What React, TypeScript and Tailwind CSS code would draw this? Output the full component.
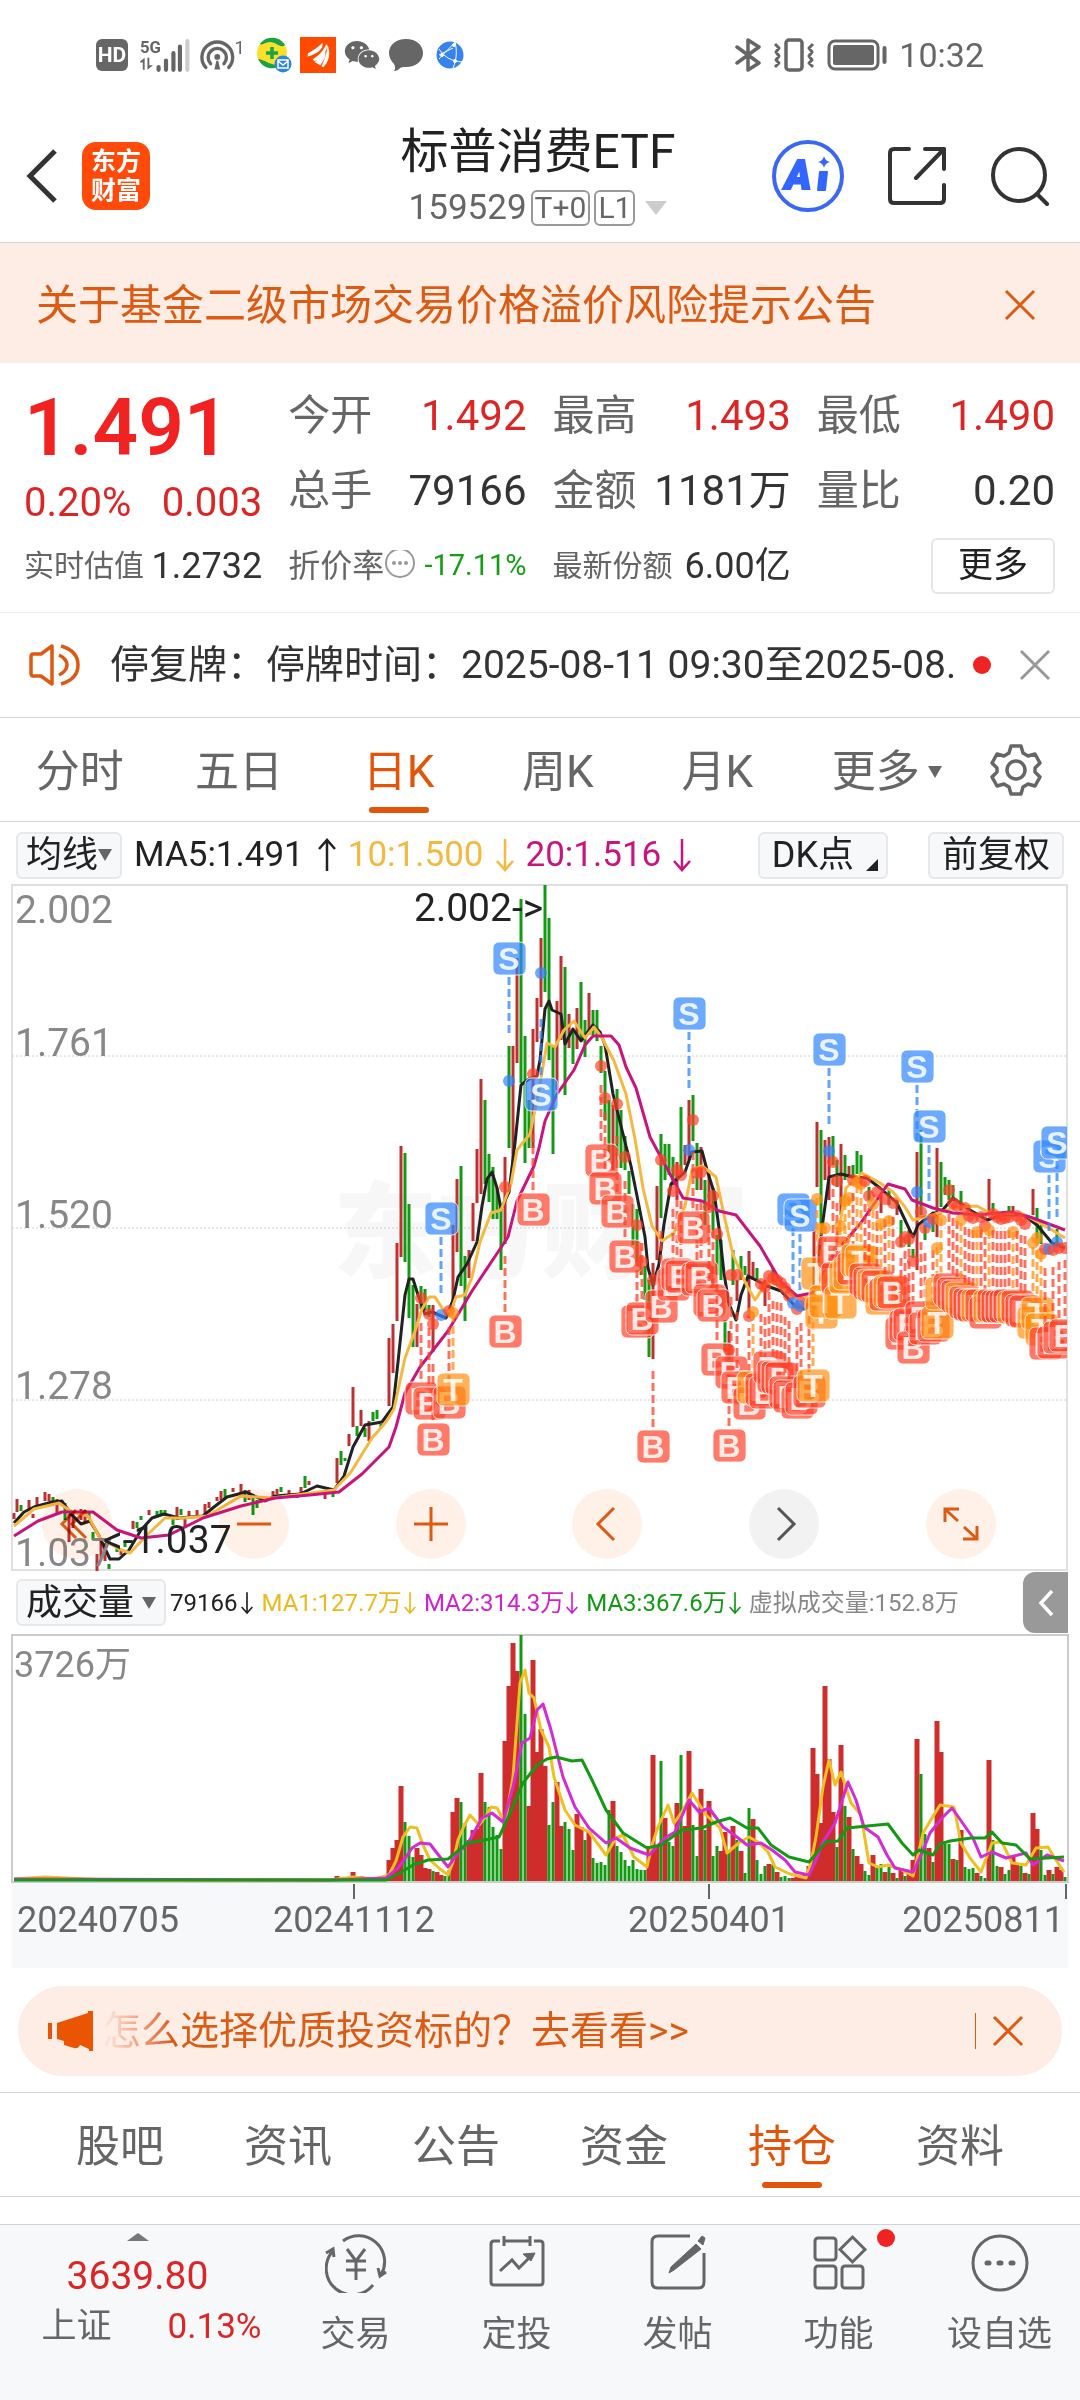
import type { ReactNode } from 'react';
import { FaWeixin } from 'react-icons/fa';

type MarkKind = 'B' | 'S' | 'T';
type Mark = [MarkKind, number, number, number];

// kind, x, box centre y, dot y
const marks: Mark[] = [
  ['B', 421, 1398, 1298], ['B', 429, 1403, 1314], ['B', 433, 1439, 1324], ['S', 441, 1218, 1315],
  ['B', 449, 1402, 1311], ['T', 453, 1389, 1313], ['B', 505, 1331, 1187], ['S', 509, 958, 1081],
  ['B', 533, 1209, 1074], ['S', 541, 1094, 973],
  ['B', 601, 1160, 1066], ['B', 605, 1188, 1098], ['B', 617, 1211, 1104], ['B', 625, 1256, 1157],
  ['B', 637, 1321, 1225], ['B', 642, 1318, 1262], ['B', 653, 1446, 1280], ['B', 661, 1306, 1160],
  ['B', 673, 1284, 1191], ['B', 677, 1274, 1170], ['B', 681, 1276, 1175], ['S', 689, 1013, 1150],
  ['B', 697, 1279, 1173], ['B', 701, 1277, 1172], ['B', 693, 1227, 1120], ['B', 709, 1300, 1207],
  ['B', 713, 1305, 1196], ['B', 717, 1359, 1234], ['B', 729, 1445, 1350], ['B', 731, 1372, 1275],
  ['B', 737, 1387, 1275], ['B', 749, 1403, 1316], ['T', 753, 1387, 1312], ['B', 761, 1389, 1284],
  ['B', 765, 1392, 1287], ['B', 769, 1367, 1276], ['B', 773, 1376, 1278], ['B', 777, 1377, 1280],
  ['B', 781, 1378, 1283], ['B', 785, 1392, 1288], ['B', 789, 1396, 1296], ['B', 797, 1402, 1309],
  ['B', 801, 1398, 1303], ['S', 793, 1209, 1303], ['S', 800, 1215, 1306],
  ['B', 809, 1391, 1303], ['T', 813, 1385, 1300],
  ['T', 817, 1273, 1199], ['T', 821, 1312, 1229], ['T', 825, 1301, 1228], ['S', 829, 1049, 1151],
  ['B', 833, 1252, 1162], ['B', 837, 1278, 1181], ['T', 840, 1302, 1226], ['T', 845, 1277, 1201],
  ['T', 849, 1273, 1198], ['B', 853, 1268, 1180], ['T', 857, 1260, 1182], ['T', 861, 1261, 1184],
  ['B', 865, 1279, 1181], ['B', 869, 1283, 1196], ['T', 873, 1285, 1204], ['B', 877, 1286, 1192],
  ['T', 881, 1298, 1224], ['B', 885, 1294, 1199], ['T', 889, 1291, 1221], ['B', 893, 1292, 1203],
  ['B', 901, 1333, 1242], ['B', 905, 1326, 1237], ['B', 909, 1324, 1239], ['B', 913, 1347, 1261],
  ['S', 917, 1066, 1192], ['B', 921, 1317, 1212], ['B', 925, 1328, 1228], ['S', 929, 1126, 1222],
  ['B', 933, 1325, 1219], ['T', 937, 1322, 1248], ['T', 941, 1293, 1220], ['B', 949, 1289, 1190],
  ['B', 953, 1293, 1203], ['B', 957, 1296, 1206], ['T', 961, 1298, 1220], ['B', 965, 1302, 1208],
  ['B', 969, 1304, 1216], ['B', 973, 1305, 1218], ['T', 977, 1305, 1232], ['B', 981, 1305, 1217],
  ['B', 985, 1312, 1226], ['T', 989, 1306, 1230], ['B', 993, 1305, 1214], ['B', 997, 1306, 1217],
  ['B', 1001, 1306, 1219], ['B', 1005, 1306, 1218], ['B', 1009, 1305, 1217], ['T', 1013, 1307, 1232],
  ['B', 1017, 1306, 1216], ['B', 1021, 1310, 1220], ['B', 1025, 1311, 1224], ['T', 1033, 1322, 1243],
  ['T', 1037, 1313, 1238], ['T', 1041, 1329, 1254], ['B', 1045, 1343, 1249], ['S', 1049, 1156, 1249],
  ['B', 1053, 1342, 1250], ['S', 1057, 1142, 1242], ['B', 1059, 1337, 1248], ['B', 1065, 1335, 1248],
];

const markColors: Record<MarkKind, string> = { B: '#ff4229', S: '#2f86ff', T: '#ff9212' };

const redCandles =
  'M14 1513V1519M17 1499V1512M29 1500V1510M33 1514V1518M37 1497V1507M45 1492V1501M49 1494V1501M57 1499V1513M69 1514V1542M73 1514V1528M81 1509V1520M85 1510V1523M97 1554V1571M101 1540V1558M105 1543V1561M121 1549V1555M133 1521V1529M149 1510V1515M177 1507V1520M185 1519V1528M189 1511V1517M197 1510V1517M205 1504V1515M209 1502V1508M217 1497V1501M221 1491V1500M233 1488V1492M241 1484V1493M249 1490V1500M273 1491V1497M277 1489V1494M289 1490V1495M297 1494V1498M301 1487V1494M309 1481V1485M325 1492V1499M337 1458V1483M349 1434V1446M353 1387V1427M361 1410V1426M369 1421V1441M389 1338V1406M393 1324V1373M397 1243V1321M401 1146V1257M417 1304V1347M433 1305V1352M453 1225V1306M457 1179V1252M469 1250V1278M473 1203V1241M477 1149V1203M481 1079V1194M505 1157V1244M513 1046V1165M517 958V1063M533 1029V1148M537 998V1042M541 938V1007M557 1001V1090M561 956V1040M569 1014V1048M577 1008V1049M589 993V1035M613 1105V1170M653 1263V1359M657 1186V1260M677 1162V1200M685 1145V1165M689 1100V1160M701 1147V1190M709 1170V1210M729 1331V1360M737 1280V1301M749 1251V1318M753 1262V1280M765 1280V1306M814 1230V1310M817 1122V1187M825 1140V1180M829 1137V1200M841 1144V1215M849 1166V1178M881 1195V1213M897 1200V1215M917 1152V1270M937 1148V1237M989 1179V1215M1013 1206V1216M1033 1189V1215';
const greenCandles =
  'M21 1505V1511M53 1497V1502M65 1503V1520M89 1511V1518M93 1532V1540M109 1564V1569M117 1546V1552M125 1541V1547M137 1522V1528M141 1516V1520M157 1511V1516M161 1510V1515M165 1510V1516M173 1518V1525M181 1509V1515M225 1489V1498M245 1490V1502M253 1498V1515M257 1500V1508M281 1487V1492M305 1476V1488M333 1494V1497M341 1451V1465M345 1458V1461M357 1426V1436M365 1428V1437M373 1412V1421M377 1410V1419M381 1424V1428M405 1153V1262M409 1204V1318M413 1285V1347M421 1286V1309M425 1289V1310M429 1305V1317M461 1166V1286M465 1256V1321M485 1100V1184M489 1154V1202M493 1167V1219M497 1188V1219M501 1204V1270M509 1046V1148M521 899V1083M525 1036V1163M529 1100V1148M545 885V992M549 918V1060M553 1045V1154M565 967V1095M573 1030V1064M581 982V1040M585 1020V1057M593 1010V1035M597 1010V1041M601 1046V1073M605 1071V1120M609 1100V1160M617 1089V1160M621 1110V1168M625 1136V1170M629 1171V1194M633 1204V1245M637 1209V1262M641 1255V1275M645 1266V1300M649 1280V1357M661 1134V1218M665 1144V1180M669 1144V1175M673 1157V1185M681 1107V1175M693 1095V1141M697 1143V1190M705 1180V1225M713 1188V1230M717 1235V1275M721 1240V1280M725 1320V1352M733 1250V1285M741 1256V1280M745 1266V1275M757 1268V1280M773 1268V1285M821 1130V1225M833 1136V1165M837 1160V1187M845 1155V1180M853 1165V1180M857 1151V1174M861 1155V1174M869 1187V1200M889 1190V1205M901 1220V1247M909 1230V1247M913 1249V1258M921 1130V1215M925 1225V1240M933 1215V1232M941 1162V1207M945 1177V1195M949 1180V1200M953 1185V1200M961 1191V1210M993 1203V1215M1009 1206V1216M1037 1208V1240M1041 1225V1244M1057 1229V1245';

const ma5 =
  '14,1523 24,1512 34,1507 52,1502 62,1501 71,1514 81,1524 90,1521 98,1534 110,1559 119,1559 129,1550 141,1530 152,1518 164,1514 179,1518 203,1516 214,1507 227,1497 246,1492 265,1501 275,1496 300,1494 317,1486 334,1490 344,1476 353,1447 365,1425 382,1422 393,1407 398,1362 405,1295 409,1279 413,1279 418,1295 425,1314 432,1312 446,1318 453,1300 458,1277 467,1264 477,1242 482,1206 487,1179 492,1172 497,1188 501,1209 509,1192 515,1143 521,1085 529,1079 537,1076 540,1060 545,1009 549,1001 552,1010 561,1014 565,1044 573,1029 581,1041 593,1025 600,1032 605,1045 613,1094 623,1134 631,1166 638,1201 645,1237 648,1268 653,1285 659,1264 664,1224 671,1184 685,1172 692,1152 702,1151 707,1170 714,1192 719,1228 724,1273 729,1304 736,1320 741,1295 748,1276 767,1286 781,1291 795,1306 805,1309 815,1291 822,1228 829,1177 841,1174 853,1177 867,1178 880,1188 897,1203 905,1220 913,1237 918,1225 933,1213 940,1213 953,1198 970,1210 987,1220 1003,1215 1023,1215 1037,1225 1052,1243 1065,1248';
const ma10 =
  '14,1526 34,1509 59,1503 72,1512 88,1516 100,1538 119,1549 130,1553 148,1534 165,1518 183,1518 207,1516 241,1496 272,1498 296,1495 334,1490 351,1472 372,1438 386,1422 394,1409 405,1358 415,1331 422,1309 429,1297 435,1297 444,1311 451,1311 456,1297 465,1295 472,1277 480,1242 491,1213 501,1210 511,1184 517,1150 530,1134 539,1090 547,1043 555,1047 564,1030 574,1021 585,1038 594,1027 602,1038 614,1061 626,1094 635,1139 643,1188 652,1226 662,1241 674,1233 685,1206 692,1170 702,1166 716,1177 724,1215 733,1255 747,1286 755,1300 767,1282 781,1286 795,1297 812,1297 828,1277 840,1224 846,1188 862,1173 880,1183 893,1192 905,1207 913,1220 933,1215 947,1210 960,1207 977,1206 990,1213 1023,1214 1047,1227 1065,1238';
const ma20 =
  '14,1536 38,1521 62,1512 93,1512 117,1530 141,1538 169,1535 203,1518 241,1506 275,1498 310,1495 339,1492 362,1474 389,1447 396,1427 405,1393 420,1367 448,1331 472,1291 496,1255 508,1237 517,1201 534,1166 539,1148 545,1121 557,1094 574,1070 585,1045 593,1036 611,1036 619,1045 626,1067 636,1088 650,1137 664,1163 683,1198 702,1201 719,1211 736,1215 760,1246 781,1282 797,1296 812,1293 833,1255 860,1224 888,1184 905,1189 912,1200 933,1208 953,1213 977,1215 1010,1212 1030,1217 1065,1230';

// bar heights from x = 389 in steps of 4; below zero is a falling day
const volumes = [
  21, 33, 41, 95, -59, -45, -24, 33, 26, 13, 12, -10, 9, 6, -5, -11, 69, 83, -79, -58, 41, 51, 52, 108, -79, -74,
  -54, -46, -32, 140, 195, 238, 210, -246, -167, 75, 221, 129, 152, 115, -56, -79, 99, 55, -59, -52, -31, 67, 54,
  -41, 49, -23, -18, -19, -16, -71, 80, -35, -29, -21, -15, -21, -12, -11, -11, 35, 126, 35, -120, 63, -39, -35, 78,
  -126, 55, 130, -56, -25, 92, -51, 80, -25, -35, 30, 49, -31, 55, -41, 30, -8, -73, 62, -21, -7, -15, 17, -16, 9,
  -4, -5, -3, 3, 4, 3, 6, 15, 133, 107, 58, 195, 122, 69, -34, 136, -75, 64, -32, 25, 17, -10, -6, 26, -13, -17, 9,
  -14, 8, -3, 11, -5, 11, 21, 142, -107, -47, 33, -19, 160, 129, -37, -37, 22, -21, 51, -14, -12, -13, 8, -5, -3,
  121, -41, -15, 14, -7, -11, 24, 16, -15, 8, -7, 68, 52, -31, -6, 11, -7, 14, 11, -4,
];

const volYellow =
  '14,1879 45,1877 110,1880 330,1880 353,1877 375,1879 389,1875 396,1861 403,1837 410,1827 417,1828 423,1845 430,1860 440,1869 448,1875 453,1862 458,1840 464,1826 470,1815 479,1825 486,1816 491,1807 497,1808 505,1823 510,1795 513,1777 520,1683 525,1670 529,1693 534,1698 541,1730 549,1747 554,1777 565,1810 575,1825 589,1832 606,1855 616,1838 623,1835 634,1857 647,1867 652,1845 658,1827 668,1805 674,1823 682,1812 692,1793 706,1815 720,1828 727,1853 740,1842 749,1837 758,1842 768,1852 775,1867 790,1874 806,1878 811,1862 816,1837 823,1787 829,1760 835,1785 841,1772 851,1803 861,1815 869,1863 878,1867 888,1865 900,1869 913,1876 918,1855 923,1833 932,1818 940,1805 954,1807 961,1843 970,1858 981,1872 992,1843 1002,1842 1012,1863 1026,1865 1036,1848 1048,1847 1054,1857 1064,1872';
const volMagenta =
  '14,1879 330,1880 386,1878 398,1868 406,1857 412,1848 420,1843 430,1844 440,1857 448,1867 458,1853 468,1843 482,1818 492,1813 503,1822 513,1787 522,1743 530,1738 537,1710 543,1704 551,1730 563,1777 575,1807 589,1828 606,1843 616,1838 630,1848 649,1855 665,1838 675,1832 689,1800 699,1812 709,1808 723,1827 737,1837 747,1845 761,1843 772,1850 785,1860 795,1872 809,1875 816,1860 823,1842 835,1823 848,1782 856,1800 864,1827 878,1837 887,1855 895,1868 913,1872 922,1853 930,1833 942,1818 952,1808 964,1825 973,1838 981,1857 992,1852 1006,1858 1026,1853 1033,1865 1047,1855 1064,1861';
const volGreen =
  '14,1880 386,1880 400,1873 413,1865 428,1860 448,1859 468,1843 480,1841 499,1837 510,1813 523,1783 537,1765 547,1759 556,1757 572,1761 582,1760 592,1780 606,1810 623,1833 647,1848 661,1845 682,1830 702,1828 716,1822 730,1818 747,1828 758,1828 771,1845 789,1857 809,1862 826,1842 838,1841 847,1828 888,1824 902,1843 913,1855 919,1850 933,1855 940,1844 950,1841 971,1838 985,1838 992,1832 1002,1843 1016,1845 1030,1859 1064,1857';

const CloseIcon = ({ className }: { className: string }) => (
  <svg viewBox="0 0 32 32" className={`w-8 h-8 ${className}`} fill="none" stroke="currentColor" strokeWidth="3">
    <path d="M2 2L30 30M30 2L2 30" />
  </svg>
);

const Arrow = ({ up = false, small = false }: { up?: boolean; small?: boolean }) => (
  <svg viewBox="0 0 18 34" className={small ? 'w-3 h-8' : 'w-[18px] h-[34px]'} fill="none" stroke="currentColor" strokeWidth="2.5">
    <path d={up ? 'M9 33V2M1 11L9 2L17 11' : 'M9 1V32M1 23L9 32L17 23'} />
  </svg>
);

const StatusBar = () => (
  <div className="flex h-[110px] items-center justify-between pl-24 pr-24 text-[#666]">
    <div className="flex items-center gap-2">
      <span className="flex h-8 w-8 items-center justify-center rounded-md bg-[#666] text-[21px] leading-6 font-bold text-white">HD</span>
      <svg viewBox="0 0 56 36" className="ml-1 h-9 w-[52px]" fill="#666">
        <text x="0" y="16" fontSize="18" fontWeight="700">5G</text>
        <path d="M0 25L5 21V34H3V26H0ZM8 21H10V29H14L8 34Z" />
        <path d="M20 34V31M28 34V24M36 34V16M43 34V9" stroke="#666" strokeWidth="4.5" strokeLinecap="round" />
        <path d="M51 34V3" stroke="#ccc" strokeWidth="4.5" strokeLinecap="round" />
      </svg>
      <svg viewBox="0 0 50 36" className="h-9 w-[48px]" fill="none" stroke="#666" strokeWidth="3.5" strokeLinecap="round">
        <path d="M6 31A16 16 0 1 1 30 31" />
        <path d="M11 27A9.500 9.500 0 1 1 25 27" />
        <circle cx="18" cy="20" r="3" fill="#666" stroke="none" />
        <path d="M17 24L15 33H21L19 24Z" fill="#666" stroke="none" />
        <text x="36" y="17" fontSize="19" fill="#666" stroke="none">1</text>
      </svg>
      <svg viewBox="0 0 36 36" className="h-9 w-9">
        <circle cx="16" cy="16" r="15" fill="#fbe02a" />
        <path d="M4 7C10 -2 24 -1 29 8C25 12 20 5 14 5C9 5 6 9 4 7Z" fill="#17a34a" />
        <path d="M2 22C8 34 22 33 24 27C16 30 8 22 2 22Z" fill="#17a34a" />
        <path d="M16 10V22M10 16H22" stroke="#17a34a" strokeWidth="3.5" />
        <circle cx="27" cy="27" r="8.500" fill="#2f86dd" />
        <path d="M22 23H32V31H22ZM22 24L27 28L32 24" fill="none" stroke="#fff" strokeWidth="1.500" />
      </svg>
      <svg viewBox="0 0 37 37" className="h-9 w-9">
        <rect width="37" height="37" fill="#ff4a00" />
        <path d="M8 17C14 14 19 10 23 6C25 11 18 18 8 20ZM13 23C20 19 25 13 27 7C30 12 24 20 15 25ZM22 30C25 24 28 17 28 8C32 15 30 26 24 31ZM15 26L26 15C27 20 24 25 21 29Z" fill="#fff" />
      </svg>
      <FaWeixin className="h-9 w-9" />
      <svg viewBox="0 0 36 34" className="h-[34px] w-9">
        <path d="M18 1C28 1 35 7 35 15C35 23 28 29 18 29C15 29 13 29 11 31C9 33 6 33 6 33C8 30 7 28 6 26C3 23 1 19 1 15C1 7 8 1 18 1Z" fill="#666" />
      </svg>
      <svg viewBox="0 0 28 28" className="ml-1 h-7 w-7" fill="none" stroke="#fff" strokeWidth="1">
        <circle cx="14" cy="14" r="13.500" fill="#3583ee" stroke="none" />
        <path d="M3 8C9 17 16 20 26 21M3 18C8 12 15 6 19 1M19 1C21 9 21 18 17 27M3 14L17 7" />
        <circle cx="6" cy="14" r="1.500" fill="#fff" />
        <circle cx="19" cy="20" r="1.500" fill="#fff" />
        <circle cx="18" cy="4" r="1.500" fill="#fff" />
      </svg>
    </div>
    <div className="flex items-center gap-3">
      <svg viewBox="0 0 26 34" className="h-[34px] w-[26px]" fill="none" stroke="#666" strokeWidth="3.500" strokeLinejoin="round" strokeLinecap="round">
        <path d="M2 9L24 25L13 32V2L24 9L2 25" />
      </svg>
      <svg viewBox="0 0 42 34" className="h-[34px] w-[42px]" fill="none" stroke="#666" strokeWidth="3.500" strokeLinejoin="round">
        <rect x="13" y="2" width="16" height="30" rx="3" />
        <path d="M2 6L6 10L3 14L6 18L3 22L6 25L2 29M40 6L36 10L39 14L36 18L39 22L36 25L40 29" strokeWidth="3" />
      </svg>
      <svg viewBox="0 0 60 34" className="h-[34px] w-[60px]">
        <rect x="2" y="3" width="49" height="28" rx="6" fill="none" stroke="#666" strokeWidth="3" />
        <rect x="6" y="7" width="41" height="20" rx="2" fill="#666" />
        <path d="M57.500 10V24" stroke="#666" strokeWidth="4" strokeLinecap="round" />
      </svg>
      <span className="text-[34px]">10:32</span>
    </div>
  </div>
);

const Header = () => (
  <header className="grid h-[133px] grid-cols-[1fr_auto_1fr] items-center border-b border-[#d5d5d5] pl-[26px] pr-[30px]">
    <div className="flex items-center gap-6">
      <button aria-label="返回">
        <svg viewBox="0 0 32 56" className="h-14 w-8" fill="none" stroke="#333" strokeWidth="5">
          <path d="M29 3L4 28L29 53" />
        </svg>
      </button>
      <a href="#home" className="flex h-[68px] w-[68px] flex-col items-center justify-center rounded-[14px] bg-[#ff4a0a] text-[25px] leading-[29px] font-bold text-white">
        <span>东方</span>
        <span>财富</span>
      </a>
    </div>
    <div className="flex flex-col items-center pt-1">
      <h1 className="text-[48px] leading-[60px] text-[#222]">标普消费ETF</h1>
      <button className="flex h-[52px] items-center gap-1 text-[35px] text-[#666]">
        159529
        <span className="rounded-md border-2 border-[#999] px-0.5 text-[30px] leading-[32px]">T+0</span>
        <span className="rounded-md border-2 border-[#999] px-0.5 text-[30px] leading-[32px]">L1</span>
        <svg viewBox="0 0 22 14" className="ml-1.5 h-3.5 w-[22px]" fill="#ccc"><path d="M0 0H22L11 14Z" /></svg>
      </button>
    </div>
    <div className="flex items-center justify-end gap-11">
      <button aria-label="Ai">
        <svg viewBox="0 0 72 72" className="h-[72px] w-[72px]">
          <circle cx="36" cy="36" r="34" fill="#fff" stroke="#3b68f2" strokeWidth="4" />
          <text x="13" y="49" fontSize="40" fontWeight="900" fill="#3366ff" stroke="#3366ff" strokeWidth="2" fontStyle="italic">A</text>
          <path d="M48 32H55L53 50H46Z" fill="#3366ff" stroke="#3366ff" strokeWidth="2" strokeLinejoin="round" />
          <path d="M52 16Q53 21 58 22Q53 23 52 28Q51 23 46 22Q51 21 52 16Z" fill="#3366ff" />
        </svg>
      </button>
      <button aria-label="分享">
        <svg viewBox="0 0 58 58" className="h-[58px] w-[58px]" fill="none" stroke="#333" strokeWidth="4" strokeLinecap="round" strokeLinejoin="round">
          <path d="M21 2H6Q2 2 2 6V52Q2 56 6 56H52Q56 56 56 52V38M37 2H56V22M56 2L28 31" />
        </svg>
      </button>
      <button aria-label="搜索">
        <svg viewBox="0 0 60 60" className="h-[60px] w-[60px]" fill="none" stroke="#333" strokeWidth="4" strokeLinecap="round">
          <circle cx="29" cy="29" r="26" />
          <path d="M47 48L57 58" />
        </svg>
      </button>
    </div>
  </header>
);

const Quote = ({ label, value, red }: { label: string; value: string; red?: boolean }) => (
  <div className="flex items-center justify-between text-[42px]">
    <span className="text-[#666]">{label}</span>
    <span className={red ? 'text-[#dc2626]' : 'text-[#333]'}>{value}</span>
  </div>
);

const Quotes = () => (
  <section className="grid auto-rows-[75px] grid-cols-4 gap-x-[26px] border-b border-[#ececec] pl-6 pr-[25px] pt-[15px] pb-[9px] whitespace-nowrap">
    <div className="row-span-2 flex flex-col text-[#dc2626]">
      <span className="text-[80px] leading-[100px] font-semibold text-[#f02222]">1.491</span>
      <div className="flex justify-between text-[40px] leading-[50px]">
        <span>0.20%</span>
        <span>0.003</span>
      </div>
    </div>
    <Quote label="今开" value="1.492" red />
    <Quote label="最高" value="1.493" red />
    <Quote label="最低" value="1.490" red />
    <Quote label="总手" value="79166" />
    <Quote label="金额" value="1181万" />
    <Quote label="量比" value="0.20" />
    <div className="flex items-center justify-between text-[36px] text-[#333]">
      <span className="text-[30px] text-[#666]">实时估值</span>1.2732
    </div>
    <div className="flex items-center justify-between text-[29px] text-[#12a012]">
      <span className="flex items-center text-[32px] text-[#666]">
        折价率
        <svg viewBox="0 0 32 32" className="h-8 w-8" fill="#999">
          <circle cx="16" cy="13" r="14" fill="none" stroke="#999" strokeWidth="2" />
          <circle cx="10" cy="13" r="2" /><circle cx="16" cy="13" r="2" /><circle cx="22" cy="13" r="2" />
        </svg>
      </span>
      -17.11%
    </div>
    <div className="flex items-center justify-between text-[36px] text-[#333]">
      <span className="text-[30px] text-[#666]">最新份额</span>6.00亿
    </div>
    <div className="flex items-center justify-end">
      <button className="h-14 rounded-md border-2 border-[#e6e6e6] px-[25px] text-[35px] text-[#222]">更多</button>
    </div>
  </section>
);

const periods = ['分时', '五日', '日K', '周K', '月K', '更多'];

const Triangle = () => (
  <svg viewBox="0 0 14 12" className="h-3 w-3.5" fill="#666"><path d="M0 0H14L7 12Z" /></svg>
);

const PeriodTabs = () => (
  <nav className="grid h-[104px] grid-cols-[repeat(6,4fr)_3fr] border-b border-[#d5d5d5] pr-1 text-[44px] text-[#666]">
    {periods.map((p) => (
      <button key={p} className={`relative flex items-center justify-center gap-2 pt-1 ${p === '日K' ? 'text-[#e25508]' : ''} ${p === '更多' ? 'pl-5' : ''}`}>
        {p}
        {p === '更多' && <Triangle />}
        {p === '日K' && <span className="absolute bottom-2 h-1.5 w-[60px] rounded-full bg-[#e25508]" />}
      </button>
    ))}
    <button aria-label="设置" className="flex items-center justify-center">
      <svg viewBox="0 0 52 52" className="h-[52px] w-[52px]" fill="none" stroke="#666" strokeWidth="3.500" strokeLinejoin="round">
        <path d="M21 2H31L33 9L38 12L45 10L50 19L45 24V28L50 33L45 42L38 40L33 43L31 50H21L19 43L14 40L7 42L2 33L7 28V24L2 19L7 10L14 12L19 9Z" />
        <circle cx="26" cy="26" r="9" />
      </svg>
    </button>
  </nav>
);

const ChipButton = ({ children }: { children: ReactNode }) => (
  <button className="flex h-[47px] items-center rounded-md border-2 border-[#e6e8eb] bg-[#f7f8fa] px-2 text-[36px] leading-10 text-[#222]">
    {children}
  </button>
);

const MaBar = () => (
  <div className="flex h-[62px] items-center justify-between pt-1 pl-4 pr-4 text-[35px] whitespace-nowrap">
    <div className="flex items-center gap-3">
      <ChipButton>均线<Triangle /></ChipButton>
      <span className="flex items-center gap-3.5 text-[#222]">MA5:1.491<Arrow up /></span>
      <span className="flex items-center gap-3 text-[#f5b940]">10:1.500<Arrow /></span>
      <span className="flex items-center gap-3 text-[#c9147d]">20:1.516<Arrow /></span>
    </div>
    <div className="flex items-center gap-10">
      <ChipButton>
        <span className="px-1">DK点</span>
        <svg viewBox="0 0 12 12" className="mt-5 ml-2 h-3 w-3" fill="#222"><path d="M12 0V12H0Z" /></svg>
      </ChipButton>
      <ChipButton><span className="px-1">前复权</span></ChipButton>
    </div>
  </div>
);

const MarkShape = ({ mark }: { mark: Mark }) => {
  const [kind, x, y, dotY] = mark;
  const dir = dotY > y ? 1 : -1;
  const color = markColors[kind];
  return (
    <g>
      <path d={`M${x} ${y + dir * 19}v${dir * 57}`} stroke={color} strokeOpacity="0.750" strokeWidth="3" strokeDasharray="8 4" />
      <circle cx={x} cy={dotY} r="6" fill={color} fillOpacity="0.700" />
      <rect x={x - 16} y={y - 16} width="33" height="33" rx="6" fill={color} fillOpacity="0.700" stroke="#fff" strokeOpacity="0.800" />
      <text x={x} y={y + 12} textAnchor="middle" fontSize="32" fontWeight="bold" fill="#fff" fillOpacity="0.850" className="font-['Liberation_Sans',sans-serif]">{kind}</text>
    </g>
  );
};

const zoomButtons: { label: string; path: string; gray?: boolean }[] = [
  { label: '最左', path: 'M34 21L20 35L34 49M44 21L30 35L44 49' },
  { label: '缩小', path: 'M18 35H52' },
  { label: '放大', path: 'M18 35H52M35 18V52' },
  { label: '左移', path: 'M42 19L26 35L42 51' },
  { label: '右移', path: 'M29 19L45 35L29 51', gray: true },
  { label: '全屏', path: 'M19 33V20H33M20 21L32 32M38 38L50 49M51 37V50H37' },
];

const PriceChart = () => (
  <div className="relative">
    <svg viewBox="0 884 1080 687" className="block w-full">
      <text x="333" y="1270" fontSize="104" fontWeight="900" fill="#f7f7f7">东方财富</text>
      <rect x="12" y="885" width="1055" height="685" fill="none" stroke="#e0e0e0" strokeWidth="2" />
      <path d="M12 1056H1067M12 1228H1067M12 1400H1067" stroke="#d0d0d0" strokeDasharray="2 2" />
      <path d={redCandles} stroke="#c03030" strokeWidth="3" />
      <path d={greenCandles} stroke="#129a12" strokeWidth="3" />
      <g fill="none" strokeWidth="3" strokeLinejoin="round">
        <polyline points={ma5} stroke="#222" />
        <polyline points={ma10} stroke="#f5b940" />
        <polyline points={ma20} stroke="#c9147d" />
      </g>
      <g fill="#888" fontSize="39">
        <text x="15" y="923">2.002</text>
        <text x="15" y="1056">1.761</text>
        <text x="15" y="1228">1.520</text>
        <text x="15" y="1399">1.278</text>
        <text x="15" y="1566">1.037</text>
      </g>
      <g fill="#222" fontSize="39">
        <text x="414" y="921">2.002-&gt;</text>
        <text x="103" y="1553">&lt;-1.037</text>
      </g>
      <svg x="12" y="884" width="1055" height="687" viewBox="12 884 1055 687">
        {marks.map((mark, i) => <MarkShape key={i} mark={mark} />)}
      </svg>
    </svg>
    <div className="absolute inset-x-0 bottom-3 flex justify-between pl-[42px] pr-[84px]">
      {zoomButtons.map((b) => (
        <button
          key={b.label}
          aria-label={b.label}
          className={`h-[70px] w-[70px] rounded-full mix-blend-multiply ${b.gray ? 'bg-[#f2f2f2] text-[#555]' : 'bg-[#fff0e8] text-[#dd5a12]'}`}
        >
          <svg viewBox="0 0 70 70" fill="none" stroke="currentColor" strokeWidth="3"><path d={b.path} /></svg>
        </button>
      ))}
    </div>
  </div>
);

const VolumeBar = () => (
  <div className="flex h-[63px] items-center pl-4 pr-3 text-[24px] whitespace-nowrap">
    <ChipButton><span className="mr-2">成交量</span><Triangle /></ChipButton>
    <div className="ml-1 flex flex-1 items-center gap-2">
      <span className="flex items-center gap-1 text-[#222]">79166<Arrow small /></span>
      <span className="flex items-center gap-0.5 text-[#ecba1a]">MA1:127.7万<Arrow small /></span>
      <span className="flex items-center gap-0.5 text-[#cf22cf]">MA2:314.3万<Arrow small /></span>
      <span className="flex items-center gap-0.5 text-[#129a12]">MA3:367.6万<Arrow small /></span>
      <span className="text-[#888]">虚拟成交量:152.8万</span>
    </div>
    <button aria-label="展开" className="flex h-[61px] w-[45px] items-center justify-center rounded-l-xl bg-[#999]">
      <svg viewBox="0 0 16 28" className="h-7 w-4" fill="none" stroke="#fff" strokeWidth="3.500"><path d="M14 2L3 14L14 26" /></svg>
    </button>
  </div>
);

const VolumeChart = () => (
  <svg viewBox="0 1634 1080 334" className="block w-full">
    <rect x="12" y="1883" width="1056" height="85" fill="#f7f8fa" />
    <rect x="12" y="1635" width="1056" height="247" fill="none" stroke="#ccc" strokeWidth="2" />
    <path d="M45 1881v-5M49 1881v-4M337 1881v-5M353 1881v-9M361 1881v-5" stroke="#cf2c2c" strokeWidth="5" />
    {volumes.map((v, i) => (
      <path key={i} d={`M${389 + i * 4} 1881v${-Math.abs(v)}`} stroke={v > 0 ? '#cf2c2c' : '#129a12'} strokeWidth={v > 0 ? 5 : 3} />
    ))}
    <g fill="none" strokeWidth="3" strokeLinejoin="round">
      <polyline points={volYellow} stroke="#f0c020" />
      <polyline points={volMagenta} stroke="#d42bd4" />
      <polyline points={volGreen} stroke="#129a12" />
    </g>
    <path d="M354 1884V1899M709 1884V1899M1066 1884V1899" stroke="#666" strokeWidth="2" />
    <text x="14" y="1677" fontSize="36" fill="#888">3726万</text>
    <g fontSize="36" fill="#666">
      <text x="17" y="1932">20240705</text>
      <text x="354" y="1932" textAnchor="middle">20241112</text>
      <text x="709" y="1932" textAnchor="middle">20250401</text>
      <text x="1064" y="1932" textAnchor="end">20250811</text>
    </g>
  </svg>
);

const sections = ['股吧', '资讯', '公告', '资金', '持仓', '资料'];

const tools: { label: string; dot?: boolean; icon: ReactNode }[] = [
  {
    label: '交易',
    icon: (
      <>
        <path d="M18 8A26 26 0 0 1 56 42M61 39L55 43L53 35M48 52A26 26 0 0 1 7 19M1 20L8 16L9 24" />
        <path d="M22 16L31 28L40 16M31 28V47M21 28H41M21 37H41" />
      </>
    ),
  },
  {
    label: '定投',
    icon: (
      <>
        <path d="M14 8H8Q5 8 5 11V49Q5 52 8 52H54Q57 52 57 49V11Q57 8 54 8H48M18 3V13M44 3V13M18 8H44" />
        <path d="M14 38L26 27L33 35L46 22" />
        <path d="M49 20L37 21L45 28Z" fill="#666" strokeWidth="1" />
      </>
    ),
  },
  {
    label: '发帖',
    icon: (
      <>
        <path d="M43 3H11Q5 3 5 9V49Q5 55 11 55H51Q57 55 57 49V20" />
        <path d="M49 11L54 16L27 37L22 40L24 34ZM51 8L55 3L58 5L56 12Z" fill="#666" strokeWidth="1" />
      </>
    ),
  },
  {
    label: '功能',
    dot: true,
    icon: (
      <>
        <rect x="7" y="5" width="21" height="22" rx="3" />
        <rect x="7" y="33" width="21" height="22" rx="3" />
        <rect x="34" y="33" width="21" height="22" rx="3" />
        <path d="M44.500 4L57 16.500L44.500 29L32 16.500Z" />
      </>
    ),
  },
  {
    label: '设自选',
    icon: (
      <>
        <circle cx="31" cy="30" r="27" />
        <path d="M18 30H20M30 30H32M42 30H44" strokeWidth="5" strokeLinecap="round" />
      </>
    ),
  },
];

export default function App() {
  return (
    <div className="flex min-h-screen w-full flex-col overflow-hidden bg-white font-['Roboto','Noto_Sans_CJK_SC',sans-serif]">
      <StatusBar />
      <Header />

      <div className="flex h-[120px] items-center justify-between bg-[#fdede4] pl-9 pr-[44px] pt-1 text-[42px] text-[#dd5a12]">
        <a href="#notice">关于基金二级市场交易价格溢价风险提示公告</a>
        <button aria-label="关闭公告"><CloseIcon className="text-[#dd5a12]" /></button>
      </div>

      <Quotes />

      <div className="flex h-[105px] items-center border-b border-[#d5d5d5] pl-7 pr-[29px] text-[39px] text-[#333]">
        <svg viewBox="0 0 54 44" className="mr-7 h-11 w-[54px]" fill="none" stroke="#dd5a12" strokeWidth="3.500" strokeLinejoin="round">
          <path d="M24 3V41L13 33H5Q3 33 3 30V14Q3 11 5 11H13ZM31 12Q39 16 39 22Q39 28 31 32M33 3Q50 8 50 22Q50 36 33 41" />
        </svg>
        <a href="#halt" className="flex-1 truncate text-clip">停复牌：停牌时间：2025-08-11 09:30至2025-08.</a>
        <span className="mr-7 h-[18px] w-[18px] rounded-full bg-[#f02222]" />
        <button aria-label="关闭提示"><CloseIcon className="text-[#999]" /></button>
      </div>

      <PeriodTabs />
      <MaBar />
      <PriceChart />
      <VolumeBar />
      <VolumeChart />

      <div className="mx-[18px] mt-[18px] mb-[16px] flex h-[90px] items-center rounded-full bg-[#fdede4] pl-[30px] pr-[38px] text-[39px] text-[#dd5a12]">
        <svg viewBox="0 0 46 40" className="mr-2 h-10 w-[46px]" fill="#ea5504">
          <path d="M0 12H4V28H0ZM9 12L40 2V0H45V40H41V38L32 34Q30 38 26 37L16 34V30L9 28Z" />
        </svg>
        <a href="#guide" className="flex-1 bg-gradient-to-r from-[#fdede4] from-0% to-[#dd5a12] to-8% bg-clip-text text-transparent">怎么选择优质投资标的？去看看&gt;&gt;</a>
        <span className="mr-4 h-9 w-px bg-[#dd5a12]" />
        <button aria-label="关闭推广"><CloseIcon className="text-[#dd5a12]" /></button>
      </div>

      <nav className="grid h-[105px] grid-cols-6 border-y border-[#d5d5d5] px-9 text-[44px] text-[#666]">
        {sections.map((s) => (
          <button key={s} className={`relative flex items-center justify-center pt-1 ${s === '持仓' ? 'text-[#e25508]' : ''}`}>
            {s}
            {s === '持仓' && <span className="absolute bottom-2 h-1.5 w-[60px] rounded-full bg-[#e25508]" />}
          </button>
        ))}
      </nav>

      <footer className="mt-auto grid h-[176px] grid-cols-[275fr_repeat(5,161fr)] border-t border-[#d0d3d8] bg-[#f7f8fa]">
        <a href="#index" className="flex flex-col items-center pt-2 text-[#dc2626]">
          <svg viewBox="0 0 22 8" className="h-2 w-[22px]" fill="#777"><path d="M11 0L22 8H0Z" /></svg>
          <span className="mt-2 text-[39px] leading-[54px]">3639.80</span>
          <span className="flex gap-14 pl-7 text-[35px] leading-[48px]"><span className="text-[#666]">上证</span>0.13%</span>
        </a>
        {tools.map((t) => (
          <button key={t.label} className="relative flex flex-col items-center justify-start pt-2 text-[35px] text-[#666]">
            <svg viewBox="0 0 62 60" className="h-[60px] w-[62px]" fill="none" stroke="#666" strokeWidth="3">{t.icon}</svg>
            <span className="mt-4 leading-[52px]">{t.label}</span>
            {t.dot && <span className="absolute top-1 right-6 h-[18px] w-[18px] rounded-full bg-[#f02222]" />}
          </button>
        ))}
      </footer>
    </div>
  );
}
